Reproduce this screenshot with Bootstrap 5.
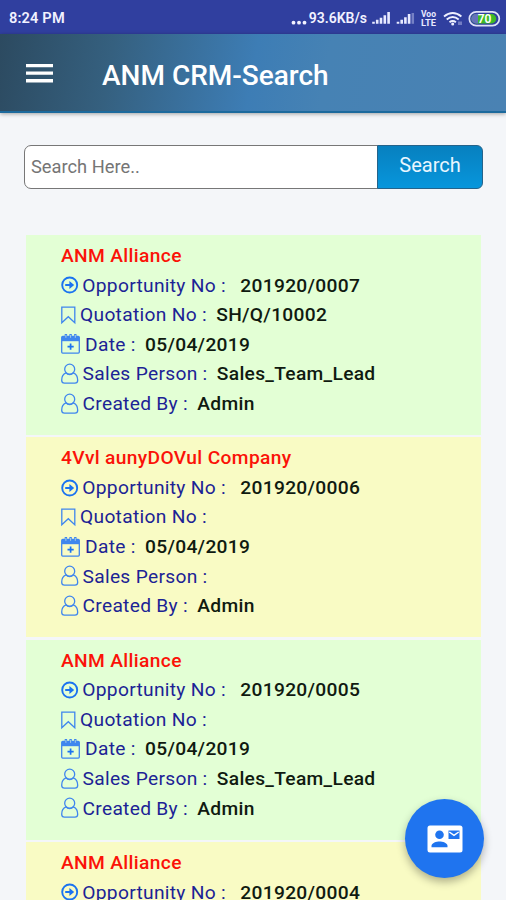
<!DOCTYPE html>
<html lang="en">
<head>
<meta charset="utf-8">
<meta name="viewport" content="width=device-width, initial-scale=1">
<title>ANM CRM-Search</title>
<link rel="stylesheet" href="https://cdn.jsdelivr.net/npm/bootstrap@5.3.0/dist/css/bootstrap.min.css">
<style>
html,body{height:100%;overflow:hidden}
body{font-family:Roboto,"Liberation Sans",sans-serif;background:#f4f6f9}
.screen{height:900px}
.status{height:34px;background:#303f9f;color:#f2f2ff;font-size:14px;font-weight:600;padding:3px 5px 0 9px}
.status .clock{font-size:14.6px;letter-spacing:.15px}
.appbar{height:79px;padding-left:26px;background:linear-gradient(100deg,#2c4a60 0%,#35607f 22%,#3d7db5 50%,#4682b4 64%,#4a82b3 100%);border-bottom:2px solid #1c6a9d;box-shadow:0 1px 4px rgba(0,0,0,.35)}
.appbar h1{font-size:28px;font-weight:500;margin-left:49px;line-height:34px;padding-top:6px}
.finder{margin:32px 23px 0 24px;height:44px}
.finder .form-control{border:1px solid #777;border-radius:7px 0 0 7px;font-size:18.3px;padding:0 6px;color:#555;box-shadow:none}
.finder .form-control::placeholder{color:#757575;opacity:1}
.finder .btn{width:106px;border:1px solid #25638a;border-radius:0 6px 6px 0;background:linear-gradient(#0780bf,#0796dc);color:#e9f6ff;font-size:20px;padding:0 0 4px}
.results{margin:46px 25px 0 26px;gap:2.4px}
.entry{height:200px;flex:none;padding:6px 0 0 35px;font-size:19.2px;letter-spacing:.3px;line-height:29.55px;background:#e3ffd5}
.entry:nth-child(even){background:#f9fbc4}
.entry h2{font-size:19.2px;font-weight:500;letter-spacing:.35px;line-height:29.55px;color:#fb1208}
.field{height:29.55px;color:#1c2395}
.field b{font-weight:500;color:#101a10;margin-left:9.3px}
.field svg{flex:none;stroke:#3f86ee;fill:none;stroke-width:1.3}
.w-opp{width:21.3px}.w-quo{width:19px}.w-date{width:24px}.w-man{width:21.5px}
.field b.far{margin-left:14.3px}
.fab{position:absolute;left:405px;top:799px;width:79px;height:79px;background:#1f74ef;box-shadow:0 4px 9px rgba(0,0,0,.3)}
</style>
</head>
<body>
<svg class="d-none" xmlns="http://www.w3.org/2000/svg">
  <symbol id="i-go" viewBox="0 0 18 20"><circle cx="8.700" cy="10" r="7.500" stroke="#1a73f0" stroke-width="1.900"/><path d="M4.200 8.900h4.200V6.100L13.200 10l-4.800 3.900v-2.800H4.200z" fill="#1a73f0" stroke="none"/></symbol>
  <symbol id="i-mark" viewBox="0 0 18 20"><path d="M.8 2.100h13v15.600l-6.500-6-6.500 6z"/></symbol>
  <symbol id="i-cal" viewBox="0 0 20 20"><rect x=".7" y="2.500" width="17.600" height="16.600" rx="1"/><path d="M1 3h17.300v4.200H1z" fill="#3f86ee" stroke="none"/><path d="M4.900 0v4.300M9.600 0v4.300M14.300 0v4.300" stroke-width="2.400"/><path d="M4.900 1v2.800M9.600 1v2.800M14.300 1v2.800" stroke="#d5eee0" stroke-width=".7"/><path d="M9.600 9.600v6.200M6.500 12.700h6.200" stroke="#1a73f0" stroke-width="1.700"/></symbol>
  <symbol id="i-man" viewBox="0 0 18 22"><path d="M4.900 9.900C2.300 10.900.7 13 .7 17.300c0 1.700 1.100 2.900 2.800 2.900h10.400c1.700 0 2.800-1.200 2.800-2.900 0-4.300-1.700-6.400-4.300-7.400-1 1-2.200 1.700-3.700 1.700s-2.800-.7-3.800-1.700z"/><circle cx="8.700" cy="6.200" r="5"/></symbol>
</svg>

<div class="screen position-relative overflow-hidden d-flex flex-column">
  <div class="status d-flex align-items-center flex-shrink-0">
    <span class="clock me-auto">8:24 PM</span>
    <svg width="18" height="18" viewBox="0 0 18 18" fill="#f2f2ff"><circle cx="2.500" cy="12.700" r="1.900"/><circle cx="8" cy="12.700" r="1.900"/><circle cx="13.500" cy="12.700" r="1.900"/></svg>
    <span>93.6KB/s</span>
    <svg class="ms-1" width="130" height="22" viewBox="0 0 130 22">
      <path d="M2.500 15.800v-2M6.200 15.800v-4M10 15.800V9.700M13.800 15.800V7.200M17.600 15.800V4M27 15.800v-2M30.700 15.800v-4M34.400 15.800V9.200M38.100 15.800V6" fill="none" stroke="#e8eaff" stroke-width="2.600"/>
      <path d="M41.800 15.800V5" stroke="#7580c5" stroke-width="2.500"/>
      <g fill="#e8eaff" font-family="Roboto,sans-serif" font-weight="700" font-size="8.500"><text x="50" y="9.300" textLength="15" lengthAdjust="spacingAndGlyphs">Voo</text><text x="50" y="17.500" textLength="15" lengthAdjust="spacingAndGlyphs">LTE</text></g>
      <path d="M73 8.500q8.700-7 17.400 0M75.700 11.500q6-4.800 12 0M78.500 14.300q3.200-2.500 6.400 0" fill="none" stroke="#eef0ff" stroke-width="1.900"/><circle cx="81.700" cy="16" r="1.500" fill="#eef0ff"/><path d="M88 13.500v3.500M90 13.500v3.500" stroke="#b5bbe8"/>
      <rect x="98.300" y="3.800" width="30" height="13.800" rx="6.900" fill="#303f9f" stroke="#dfe2f8" stroke-width="1.700"/>
      <path d="M105 6h15.500a4.750 4.750 0 0 1 0 9.500H105a4.750 4.750 0 0 1 0-9.500z" fill="#3fbb25"/><path d="M105 6h2v9.500h-2a4.750 4.750 0 0 1 0-9.500z" fill="#6672bb"/>
      <text x="113.500" y="15" text-anchor="middle" fill="#fff" font-family="Roboto,sans-serif" font-weight="600" font-size="12">70</text>
    </svg>
  </div>
  <header class="appbar d-flex align-items-center flex-shrink-0 text-white">
    <svg width="27" height="22" viewBox="0 0 27 22" stroke="#fff" stroke-width="3.400"><path d="M0 3.600h27M0 11.100h27M0 18.800h27"/></svg>
    <h1 class="mb-0">ANM CRM-Search</h1>
  </header>
  <form class="finder input-group flex-nowrap w-auto flex-shrink-0">
    <input type="text" class="form-control" placeholder="Search Here.." aria-label="Search">
    <button type="button" class="btn">Search</button>
  </form>

  <main class="results d-flex flex-column">
    <article class="entry">
      <h2 class="mb-0">ANM Alliance</h2>
      <div class="field d-flex align-items-center"><span class="w-opp d-flex"><svg width="18" height="20"><use href="#i-go"/></svg></span>Opportunity No :<b class="far">201920/0007</b></div>
      <div class="field d-flex align-items-center"><span class="w-quo d-flex"><svg width="18" height="20"><use href="#i-mark"/></svg></span>Quotation No :<b>SH/Q/10002</b></div>
      <div class="field d-flex align-items-center"><span class="w-date d-flex"><svg width="20" height="20"><use href="#i-cal"/></svg></span>Date :<b>05/04/2019</b></div>
      <div class="field d-flex align-items-center"><span class="w-man d-flex"><svg width="18" height="22"><use href="#i-man"/></svg></span>Sales Person :<b>Sales_Team_Lead</b></div>
      <div class="field d-flex align-items-center"><span class="w-man d-flex"><svg width="18" height="22"><use href="#i-man"/></svg></span>Created By :<b>Admin</b></div>
    </article>
    <article class="entry">
      <h2 class="mb-0">4Vvl aunyDOVul Company</h2>
      <div class="field d-flex align-items-center"><span class="w-opp d-flex"><svg width="18" height="20"><use href="#i-go"/></svg></span>Opportunity No :<b class="far">201920/0006</b></div>
      <div class="field d-flex align-items-center"><span class="w-quo d-flex"><svg width="18" height="20"><use href="#i-mark"/></svg></span>Quotation No :</div>
      <div class="field d-flex align-items-center"><span class="w-date d-flex"><svg width="20" height="20"><use href="#i-cal"/></svg></span>Date :<b>05/04/2019</b></div>
      <div class="field d-flex align-items-center"><span class="w-man d-flex"><svg width="18" height="22"><use href="#i-man"/></svg></span>Sales Person :</div>
      <div class="field d-flex align-items-center"><span class="w-man d-flex"><svg width="18" height="22"><use href="#i-man"/></svg></span>Created By :<b>Admin</b></div>
    </article>
    <article class="entry">
      <h2 class="mb-0">ANM Alliance</h2>
      <div class="field d-flex align-items-center"><span class="w-opp d-flex"><svg width="18" height="20"><use href="#i-go"/></svg></span>Opportunity No :<b class="far">201920/0005</b></div>
      <div class="field d-flex align-items-center"><span class="w-quo d-flex"><svg width="18" height="20"><use href="#i-mark"/></svg></span>Quotation No :</div>
      <div class="field d-flex align-items-center"><span class="w-date d-flex"><svg width="20" height="20"><use href="#i-cal"/></svg></span>Date :<b>05/04/2019</b></div>
      <div class="field d-flex align-items-center"><span class="w-man d-flex"><svg width="18" height="22"><use href="#i-man"/></svg></span>Sales Person :<b>Sales_Team_Lead</b></div>
      <div class="field d-flex align-items-center"><span class="w-man d-flex"><svg width="18" height="22"><use href="#i-man"/></svg></span>Created By :<b>Admin</b></div>
    </article>
    <article class="entry">
      <h2 class="mb-0">ANM Alliance</h2>
      <div class="field d-flex align-items-center"><span class="w-opp d-flex"><svg width="18" height="20"><use href="#i-go"/></svg></span>Opportunity No :<b class="far">201920/0004</b></div>
    </article>
  </main>

  <button type="button" class="fab btn rounded-circle border-0 p-0 d-flex align-items-center justify-content-center" aria-label="Contacts">
    <svg width="36" height="28" viewBox="0 0 36 28"><rect x=".5" y=".5" width="35" height="27" rx="2.500" fill="#fff"/><circle cx="12.500" cy="9.800" r="4.300" fill="#1f74ef"/><path d="M4.500 22.300v-1.500c0-3 5-4.400 8-4.400s8 1.400 8 4.400v1.500z" fill="#1f74ef"/><path d="M21.500 5.500h11v8.500h-11z" fill="#1f74ef"/><path d="M22.300 7l4.700 3.300L31.700 7" fill="none" stroke="#fff" stroke-width="1.500"/></svg>
  </button>
</div>
<script src="https://cdn.jsdelivr.net/npm/bootstrap@5.3.0/dist/js/bootstrap.bundle.min.js"></script>
</body>
</html>
